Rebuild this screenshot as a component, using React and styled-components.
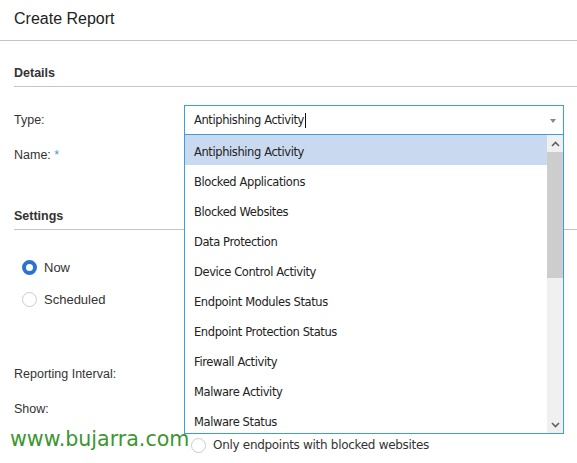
import React from "react";
import styled, { createGlobalStyle } from "styled-components";

const GlobalStyle = createGlobalStyle`
  html, body {
    margin: 0;
    padding: 0;
    background: #fff;
  }
  body {
    font-family: "Liberation Sans", Arial, sans-serif;
    color: #333;
  }
`;

const Page = styled.div`
  position: relative;
  width: 577px;
  height: 463px;
  overflow: hidden;
  background: #fff;
`;

const Header = styled.div`
  height: 41px;
  box-sizing: border-box;
  border-bottom: 1px solid #c4c4c4;
  display: flex;
  align-items: center;
  padding-left: 14px;
  padding-bottom: 2px;
`;

const Title = styled.h1`
  margin: 0;
  font-size: 16px;
  font-weight: normal;
  color: #222;
`;

const Body = styled.div`
  padding-left: 14px;
`;

const SectionTitle = styled.div`
  margin-top: ${(p) => p.$top}px;
  line-height: 22px;
  padding-bottom: 2px;
  font-size: 12.5px;
  font-weight: bold;
  color: #333;
  border-bottom: 1px solid #c4c4c4;
`;

const Row = styled.div`
  display: flex;
  align-items: center;
  height: 30px;
  margin-top: ${(p) => p.$top}px;
`;

const Label = styled.div`
  width: 170px;
  font-size: 12.5px;
  color: #333;
  flex-shrink: 0;
`;

const Required = styled.span`
  color: #3d9be9;
`;

const SelectWrap = styled.div`
  position: relative;
  width: 380px;
  height: 30px;
  box-sizing: border-box;
  border: 1px solid ${(p) => (p.$open ? "#3b9ee0" : "#cfcfcf")};
  display: flex;
  align-items: center;
  padding-left: 9px;
  font-family: "DejaVu Sans", Tahoma, sans-serif;
  font-size: 11.5px;
  letter-spacing: -0.4px;
  color: #222;
  background: #fff;
`;

const Cursor = styled.span`
  display: inline-block;
  width: 1px;
  height: 15px;
  background: #111;
  margin-left: 1px;
  vertical-align: middle;
`;

const Caret = styled.span`
  position: absolute;
  right: 7px;
  top: 13px;
  width: 0;
  height: 0;
  border-left: 3px solid transparent;
  border-right: 3px solid transparent;
  border-top: 4px solid #888;
`;

const Dropdown = styled.div`
  position: absolute;
  top: 29px;
  left: -1px;
  width: 380px;
  height: 299px;
  box-sizing: border-box;
  border: 1px solid #3b9ee0;
  border-top: none;
  background: #fff;
  display: flex;
  z-index: 5;
`;

const List = styled.div`
  flex: 1;
  overflow: hidden;
`;

const Item = styled.div`
  height: 30px;
  box-sizing: border-box;
  display: flex;
  align-items: center;
  padding: 3px 0 0 9px;
  background: ${(p) => (p.$active ? "#c9d9f0" : "transparent")};
  white-space: nowrap;
`;

const Scrollbar = styled.div`
  width: 16px;
  background: #f0f0f0;
  display: flex;
  flex-direction: column;
`;

const ScrollButton = styled.div`
  height: 17px;
  display: flex;
  align-items: center;
  justify-content: center;
  flex-shrink: 0;
`;

const Thumb = styled.div`
  height: 126px;
  background: #cdcdcd;
  flex-shrink: 0;
`;

const Track = styled.div`
  flex: 1;
`;

const RadioRow = styled.label`
  display: flex;
  align-items: center;
  height: 20px;
  margin-top: ${(p) => p.$top || 0}px;
  padding-left: ${(p) => p.$indent || 0}px;
  font-size: ${(p) => p.$size || 13}px;
  font-family: ${(p) =>
    p.$tahoma
      ? '"DejaVu Sans", Tahoma, sans-serif'
      : '"Liberation Sans", Arial, sans-serif'};
  letter-spacing: ${(p) => (p.$tahoma ? "-0.3px" : "0")};
  color: #333;
`;

const Radio = styled.span`
  width: 15px;
  height: 15px;
  box-sizing: border-box;
  border-radius: 50%;
  margin-right: 7px;
  flex-shrink: 0;
  border: ${(p) => (p.$checked ? "4px solid #2d72d2" : "1px solid #cccccc")};
  background: #fff;
`;

const ShowRow = styled.div`
  display: flex;
  align-items: flex-start;
  margin-top: 10px;
`;

const ShowLabel = styled(Label)`
  line-height: 20px;
`;

const Options = styled.div`
  display: flex;
  flex-direction: column;
  gap: 16px;
`;

const Watermark = styled.div`
  position: absolute;
  left: 10px;
  top: 427px;
  font-family: "DejaVu Sans", Verdana, sans-serif;
  font-size: 20.6px;
  color: #3d9632;
  z-index: 10;
`;

const Chevron = ({ up }) => (
  <svg width="9" height="6" viewBox="0 0 9 6">
    <path
      d={up ? "M1 5 L4.5 1.5 L8 5" : "M1 1 L4.5 4.5 L8 1"}
      fill="none"
      stroke="#606060"
      strokeWidth="1.6"
    />
  </svg>
);

const reportTypes = [
  "Antiphishing Activity",
  "Blocked Applications",
  "Blocked Websites",
  "Data Protection",
  "Device Control Activity",
  "Endpoint Modules Status",
  "Endpoint Protection Status",
  "Firewall Activity",
  "Malware Activity",
  "Malware Status",
];

const App = () => (
  <Page>
    <GlobalStyle />
    <Header>
      <Title>Create Report</Title>
    </Header>
    <Body>
      <SectionTitle $top={21}>Details</SectionTitle>

      <Row $top={18}>
        <Label>Type:</Label>
        <SelectWrap $open>
          Antiphishing Activity
          <Cursor />
          <Caret />
          <Dropdown>
            <List>
              {reportTypes.map((type, i) => (
                <Item key={type} $active={i === 0}>
                  {type}
                </Item>
              ))}
            </List>
            <Scrollbar>
              <ScrollButton>
                <Chevron up />
              </ScrollButton>
              <Thumb />
              <Track />
              <ScrollButton>
                <Chevron />
              </ScrollButton>
            </Scrollbar>
          </Dropdown>
        </SelectWrap>
      </Row>

      <Row $top={5}>
        <Label>
          Name: <Required>*</Required>
        </Label>
      </Row>

      <SectionTitle $top={35}>Settings</SectionTitle>

      <RadioRow $top={27} $indent={8}>
        <Radio $checked />
        Now
      </RadioRow>
      <RadioRow $top={12} $indent={8}>
        <Radio />
        Scheduled
      </RadioRow>

      <Row $top={50}>
        <Label>Reporting Interval:</Label>
        <SelectWrap>Today</SelectWrap>
      </Row>

      <ShowRow>
        <ShowLabel>Show:</ShowLabel>
        <Options>
          <RadioRow $indent={7} $size={12} $tahoma>
            <Radio $checked />
            All endpoints
          </RadioRow>
          <RadioRow $indent={7} $size={12} $tahoma>
            <Radio />
            Only endpoints with blocked websites
          </RadioRow>
        </Options>
      </ShowRow>
    </Body>
    <Watermark>www.bujarra.com</Watermark>
  </Page>
);

export default App;
